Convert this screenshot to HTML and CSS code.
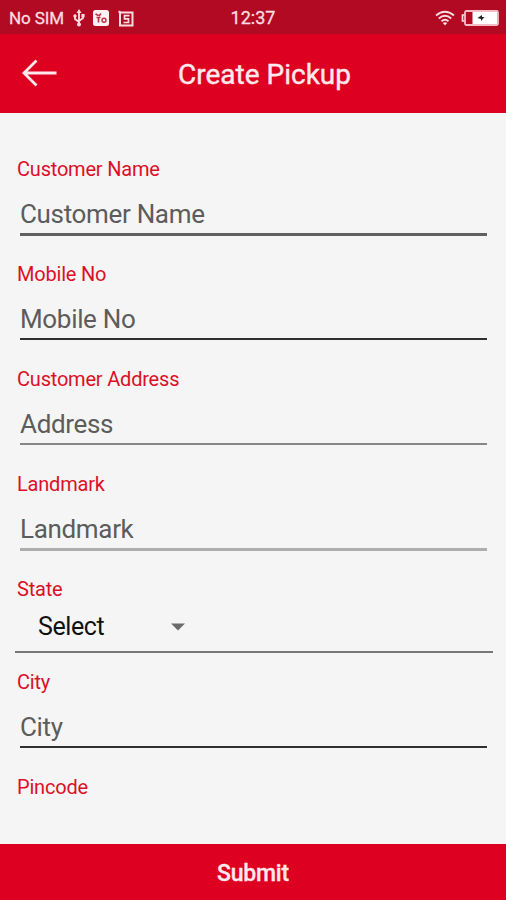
FILE: index.html
```html
<!doctype html>
<html>
<head>
<meta charset="utf-8">
<title>Create Pickup</title>
	<link rel="stylesheet" href="styles.css">
</head>

<body>

	<!-- Status bar -->
	<div class="statusbar">
		<div class="status-left">
			<span class="carrier">No SIM</span>
			<svg class="usb" width="12" height="18" viewBox="0 0 12 18">
				<path d="M6 2v13M2 7v3l4 3M10 6v3l-4 3" fill="none" stroke="#fbdde1" stroke-width="1.9"/>
				<path d="M6 0l2.500 4h-5z" fill="#fbdde1"/>
				<circle cx="6" cy="15.500" r="2" fill="#fbdde1"/>
				<circle cx="2" cy="7" r="1.700" fill="#fbdde1"/>
				<rect x="8.400" y="5" width="3.200" height="3.200" fill="#fbdde1"/>
			</svg>
			<svg class="app" width="16" height="16" viewBox="0 0 16 16">
				<rect width="16" height="16" rx="2.500" fill="#fff0f2"/>
				<path d="M2.500 4l3 1.500M8 3.500L6 6M3.500 7.500h4M5.500 7v5.500" fill="none" stroke="#b5304a" stroke-width="1.600"/>
				<circle cx="11" cy="10.300" r="2" fill="none" stroke="#b5304a" stroke-width="1.400"/>
			</svg>
			<svg class="app2" width="16" height="17" viewBox="0 0 16 17">
				<path d="M.500 1.500l2.500 1h11.500v13H2v-14" fill="none" stroke="#fbdde1" stroke-width="2"/>
				<path d="M11.500 5.700H6.500v3.200h4v3.600H5.500" fill="none" stroke="#fbdde1" stroke-width="1.700"/>
			</svg>
		</div>
		<span class="time">12:37</span>
		<div class="status-right">
			<svg class="wifi" width="20" height="16" viewBox="0 0 20 16">
				<path d="M1 5.500Q10-2 19 5.500M3.800 8.500Q10 3.200 16.200 8.500M6.500 11.300Q10 8.300 13.500 11.300" fill="none" stroke="#fbdde1" stroke-width="1.900"/>
				<path d="M7.800 13Q10 11.300 12.200 13L10 15.500z" fill="#fbdde1"/>
			</svg>
			<svg class="battery" width="38" height="16" viewBox="0 0 38 16">
				<path d="M4 5H1.500v6H4" fill="none" stroke="#fbdde1" stroke-width="1.700"/>
				<rect x="4" y="1" width="33" height="14" rx="1.500" fill="none" stroke="#f5bcc5" stroke-width="1.800"/>
				<rect x="11.500" y="2" width="24.500" height="12" fill="#fff"/>
				<path d="M16.500 8l4.500-3v2h2.500l-3.500 4v-2z" fill="#222"/>
			</svg>
		</div>
	</div>

	<!-- Header -->
	<header class="header">
		<svg class="back" width="36" height="28" viewBox="0 0 36 28">
			<path d="M14.500 1.500L2 14l12.500 12.500M2 14h32.500" fill="none" stroke="#ffe9ec" stroke-width="2.800"/>
		</svg>
		<h1>Create Pickup</h1>
	</header>

	<form class="pickup-form" id="pickupForm">
		<div class="field">
			<label for="custName">Customer Name</label>
			<input class="line-thick" type="text" id="custName" name="custName" placeholder="Customer Name">
		</div>
		<div class="field">
			<label for="mobileNo">Mobile No</label>
			<input type="text" id="mobileNo" name="mobileNo" placeholder="Mobile No">
		</div>
		<div class="field">
			<label for="address">Customer Address</label>
			<input class="line-grey" type="text" id="address" name="address" placeholder="Address">
		</div>
		<div class="field">
			<label for="landmark">Landmark</label>
			<input class="line-light" type="text" id="landmark" name="landmark" placeholder="Landmark">
		</div>
		<div class="field field-state">
			<label>State</label>
			<div class="select">
				<span>Select</span>
				<svg width="14" height="8" viewBox="0 0 14 8"><path d="M0 .500h14L7 7.500z" fill="#6b6b6b"/></svg>
			</div>
		</div>
		<div class="field">
			<label for="city">City</label>
			<input type="text" id="city" name="city" placeholder="City">
		</div>
		<div class="field">
			<label>Pincode</label>
		</div>
	</form>

	<button class="submit" type="submit" form="pickupForm">Submit</button>

</body>
</html>
```

FILE: styles.css
```css
*{
	box-sizing: border-box;
}

body{
	margin: 0;
	height: 900px;
	display: flex;
	flex-direction: column;
	overflow: hidden;
	background: #f5f5f5;
	font-family: Roboto, "Liberation Sans", sans-serif;
}

/*Status bar*/
.statusbar{
	flex: none;
	height: 34px;
	padding: 2px 7px 0 9px;
	display: grid;
	grid-template-columns: 1fr auto 1fr;
	align-items: center;
	background: #b20a22;
	color: #fbdde1;
	font-size: 17px;
	-webkit-text-stroke: 0.3px #fbdde1;
}

.status-left, .status-right{
	display: flex;
	align-items: center;
}

.status-right{
	justify-content: flex-end;
	gap: 6px;
}

.carrier{
	letter-spacing: -0.1px;
}

.time{
	margin: -1px 2px 0 0;
	font-size: 18px;
}

.usb{
	margin-left: 9px;
}

.app{
	margin-left: 8px;
}

.app2{
	margin-left: 9px;
}

/*Header*/
.header{
	flex: none;
	height: 79px;
	padding: 0 22px;
	display: grid;
	grid-template-columns: 36px 1fr 13px;
	align-items: center;
	background: #de0021;
	color: #ffe9ec;
}

.back{
	margin-bottom: 2px;
}

.header h1{
	margin: 2px 0 0;
	text-align: center;
	font-size: 28px;
	font-weight: 400;
	-webkit-text-stroke: 0.4px #ffe9ec;
}

/*Form*/
.pickup-form{
	flex: 1;
	min-height: 0;
	padding: 44px 19px 0 17px;
	overflow: hidden;
}

.field{
	height: 105px;
}

.field label{
	display: block;
	height: 24px;
	line-height: 24px;
	font-size: 20px;
	letter-spacing: -0.2px;
	color: #db1028;
}

.field input{
	display: block;
	width: 467px;
	height: 40px;
	margin: 14px 0 0 3px;
	padding: 0;
	border: 0;
	border-bottom: 2px solid #303030;
	border-radius: 0;
	background: none;
	font: 26px Roboto, "Liberation Sans", sans-serif;
	letter-spacing: -0.33px;
	outline: none;
}

.field input::placeholder{
	color: #5c5c5c;
	opacity: 1;
}

.field .line-thick{
	height: 41px;
	border-bottom: 3px solid #606060;
}

.field .line-grey{
	border-color: #868686;
}

.field .line-light{
	height: 41px;
	border-bottom: 3px solid #adadad;
}

.field-state{
	height: 93px;
}

.select{
	display: flex;
	align-items: center;
	gap: 67px;
	width: 478px;
	height: 52px;
	margin-left: -2px;
	padding: 1px 0 0 23px;
	border-bottom: 2px solid #777;
	font-size: 25px;
	letter-spacing: -0.4px;
	color: #111;
}

/*Submit*/
.submit{
	flex: none;
	height: 56px;
	padding: 2px 0 0;
	border: 0;
	background: #de0021;
	color: #ffe9ec;
	font: 500 23px Roboto, "Liberation Sans", sans-serif;
	letter-spacing: -0.2px;
	-webkit-text-stroke: 0.3px #ffe9ec;
}
```
